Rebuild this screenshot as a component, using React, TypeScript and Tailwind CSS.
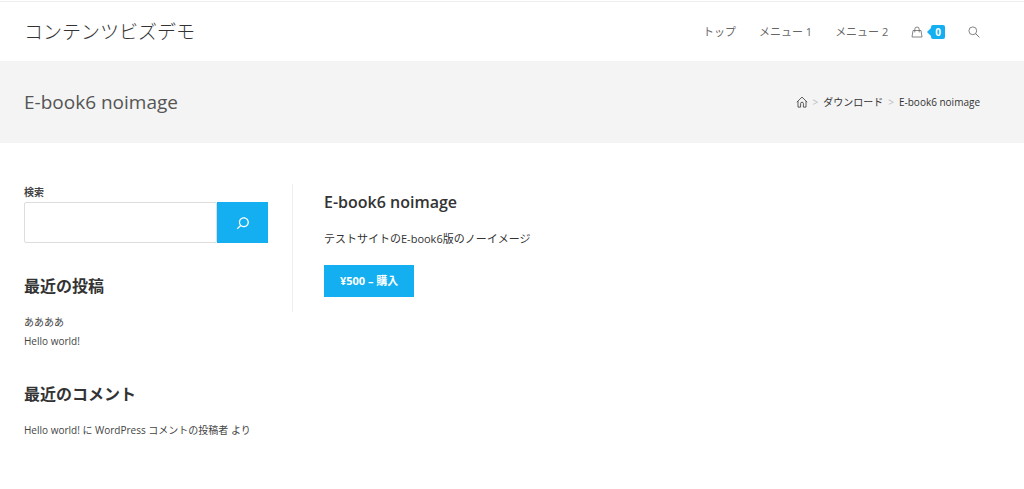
import React, { useState } from "react";

const BagIcon = () => (
  <svg className="h-3 w-3" viewBox="0 0 12 12" fill="none" stroke="currentColor">
    <path d="M2 4.5h8l1 6.5H1z" strokeWidth="0.8" strokeLinejoin="round" />
    <path d="M3.8 6.4V3.2a2.2 2.2 0 0 1 4.4 0v3.2" strokeWidth="0.8" />
  </svg>
);

const MagnifierIcon = () => (
  <svg className="h-3 w-3" viewBox="0 0 12 12" fill="none" stroke="currentColor">
    <circle cx="4.8" cy="4.8" r="3.9" strokeWidth="0.8" />
    <path d="M7.6 7.6l3.8 3.8" strokeWidth="0.9" />
  </svg>
);

const HomeIcon = () => (
  <svg className="h-3 w-3" viewBox="0 0 12 12" fill="none" stroke="currentColor">
    <path
      d="M0.8 6.2L6 1.1l5.2 5.1M2 5.2v5.9h2.6V7.6a1.4 1.4 0 0 1 2.8 0v3.5H10V5.2"
      strokeWidth="0.8"
      strokeLinejoin="round"
    />
  </svg>
);

const SearchIcon = () => (
  <svg className="h-5 w-5" viewBox="0 0 24 24" fill="currentColor">
    <path d="M13 5c-3.3 0-6 2.7-6 6 0 1.4.5 2.7 1.3 3.7l-3.8 3.8 1.1 1.1 3.8-3.8c1 .8 2.3 1.3 3.7 1.3 3.3 0 6-2.7 6-6S16.3 5 13 5zm0 10.5c-2.5 0-4.5-2-4.5-4.5s2-4.5 4.5-4.5 4.5 2 4.5 4.5-2 4.5-4.5 4.5z" />
  </svg>
);

const menu = ["トップ", "メニュー 1", "メニュー 2"];

const Header = () => (
  <header className="flex items-center justify-between border-t border-[#eeeeee] pt-4 pb-[15px] pl-6 pr-11">
    <a href="#" className="text-[19px] leading-7 font-light text-[#333333]">
      コンテンツビズデモ
    </a>
    <nav className="flex items-center gap-[23px] text-[11px] leading-5 text-[#666666]">
      {menu.map((item) => (
        <a key={item} href="#">
          {item}
        </a>
      ))}
      <a href="#" aria-label="カート" className="flex items-center gap-1">
        <BagIcon />
        <span className="flex items-center">
          <span className="border-y-4 border-r-4 border-y-transparent border-r-[#13aff0]" />
          <span className="rounded-xs bg-[#13aff0] px-1 text-[10px] leading-[14px] font-bold text-white">
            0
          </span>
        </span>
      </a>
      <button type="button" aria-label="サイト内検索">
        <MagnifierIcon />
      </button>
    </nav>
  </header>
);

const PageHeader = () => (
  <div className="flex items-center justify-between bg-[#f4f4f4] py-7 pl-6 pr-11">
    <h1 className="text-[19px] leading-[26px] text-[#555555]">
      E-book6 noimage
    </h1>
    <nav
      aria-label="パンくず"
      className="flex items-center gap-[5px] text-[10px] leading-5 text-[#333333]"
    >
      <a href="#" aria-label="ホーム">
        <HomeIcon />
      </a>
      <span className="text-[#bbbbbb]">&gt;</span>
      <a href="#">ダウンロード</a>
      <span className="text-[#bbbbbb]">&gt;</span>
      <span>E-book6 noimage</span>
    </nav>
  </div>
);

const Sidebar = () => {
  const [keyword, setKeyword] = useState("");

  return (
    <aside className="w-[244px] shrink-0 text-[10px] leading-[19px] text-[#444444]">
      <form onSubmit={(e) => e.preventDefault()}>
        <label htmlFor="keyword" className="mb-0.5 block font-bold leading-4">
          検索
        </label>
        <div className="flex h-[41px]">
          <input
            id="keyword"
            type="search"
            value={keyword}
            onChange={(e) => setKeyword(e.target.value)}
            className="min-w-0 flex-1 rounded-xs border border-[#dddddd] px-3 outline-none"
          />
          <button
            type="submit"
            aria-label="検索"
            className="flex w-[51px] items-center justify-center bg-[#13aff0] text-white"
          >
            <SearchIcon />
          </button>
        </div>
      </form>

      <h2 className="mt-[33px] text-base leading-5 font-bold text-[#333333]">
        最近の投稿
      </h2>
      <ul className="mt-[17px]">
        <li>
          <a href="#">ああああ</a>
        </li>
        <li>
          <a href="#">Hello world!</a>
        </li>
      </ul>

      <h2 className="mt-[33px] text-base leading-5 font-bold text-[#333333]">
        最近のコメント
      </h2>
      <ul className="mt-[17px]">
        <li>
          <a href="#">Hello world!</a> に{" "}
          <a href="#">WordPress コメントの投稿者</a> より
        </li>
      </ul>
    </aside>
  );
};

const App = () => {
  return (
    <div className="bg-white pt-px font-['Open_Sans','Noto_Sans_CJK_JP',sans-serif]">
      <Header />
      <PageHeader />
      <div className="flex items-start gap-6 pt-[41px] pb-12 pl-6 pr-11">
        <Sidebar />
        <main className="flex-1 border-l border-[#eeeeee] pt-1.5 pb-[15px] pl-[31px] text-[#333333]">
          <h2 className="text-base leading-6 font-semibold">E-book6 noimage</h2>
          <p className="mt-4 text-[11px] leading-[18px]">
            テストサイトのE-book6版のノーイメージ
          </p>
          <button
            type="button"
            className="mt-[17px] block bg-[#13aff0] px-4 text-[11px] leading-8 font-bold text-white"
          >
            ¥500 – 購入
          </button>
        </main>
      </div>
    </div>
  );
};

export default App;
